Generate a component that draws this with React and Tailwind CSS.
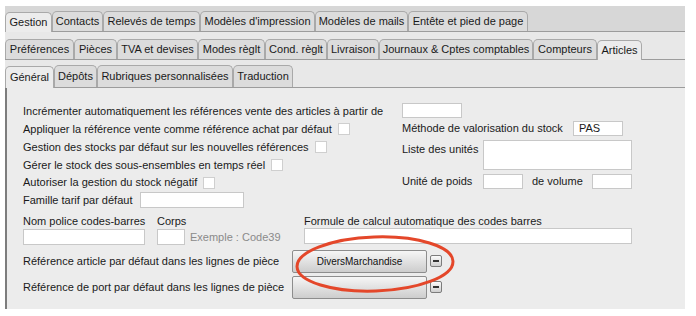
import React from 'react';

const row1 = [
  ['Gestion', 47, true],
  ['Contacts', 51],
  ['Relevés de temps', 97],
  ["Modèles d'impression", 115],
  ['Modèles de mails', 93],
  ['Entête et pied de page', 120],
];

const row2 = [
  ['Préférences', 69],
  ['Pièces', 43],
  ['TVA et devises', 81],
  ['Modes règlt', 67],
  ['Cond. règlt', 62],
  ['Livraison', 52],
  ['Journaux & Cptes comptables', 154],
  ['Compteurs', 64],
  ['Articles', 45, true],
];

const row3 = [
  ['Général', 49, true],
  ['Dépôts', 43],
  ['Rubriques personnalisées', 136],
  ['Traduction', 60],
];

function Tab({ label, width, active, height }) {
  return (
    <div
      style={{ width }}
      className={`flex shrink-0 items-center justify-center whitespace-nowrap rounded-t-[5px] border border-b-0 border-[#a9a9a9] text-[11px] text-[#1a1a1a] ${
        active ? 'relative z-10 -mb-px bg-[#ececec] pb-px' : 'bg-[#dcdcdc]'
      } ${height}`}
    >
      {label}
    </div>
  );
}

function TabRow({ tabs, strip, height }) {
  return (
    <div className={`flex items-end border-b border-[#9c9c9c] ${strip}`}>
      {tabs.map(([label, width, active]) => (
        <Tab key={label} label={label} width={width} active={active} height={height} />
      ))}
    </div>
  );
}

function Field({ className = '', children }) {
  return (
    <div className={`shrink-0 border border-[#c8c8c8] bg-white text-[11px] leading-[13px] ${className}`}>
      {children}
    </div>
  );
}

function Check() {
  return <div className="ml-[6px] h-[12px] w-[12px] shrink-0 border border-[#cfcfcf] bg-white" />;
}

function Minus() {
  return (
    <div className="ml-[3px] flex h-[12px] w-[12px] items-center justify-center rounded-[2px] border border-[#7c7c7c] bg-gradient-to-b from-[#fbfbfb] to-[#cfcfcf]">
      <div className="h-[2px] w-[6px] bg-[#333]" />
    </div>
  );
}

function RefButton({ children }) {
  return (
    <div className="flex h-[23px] w-[135px] shrink-0 items-center justify-center rounded-[2px] border border-[#8d8d8d] bg-gradient-to-b from-[#f6f6f6] to-[#cdcdcd] text-[10px] text-[#111]">
      {children}
    </div>
  );
}

export default function App() {
  return (
    <div className="h-[316px] w-[696px] bg-white pl-[5px] pt-[6px]" style={{ fontFamily: '"Liberation Sans", Arial, sans-serif' }}>
      <div className="relative flex h-[303px] w-[680px] flex-col whitespace-nowrap bg-[#ececec] text-[#1a1a1a]">
        <TabRow tabs={row1} strip="h-[26px] bg-[#d7d7d7]" height="h-[20px]" />
        <TabRow tabs={row2} strip="h-[28px] bg-[#e8e8e8]" height="h-[20px]" />
        <TabRow tabs={row3} strip="h-[28px] bg-[#e8e8e8]" height="h-[22px]" />

        <div className="flex flex-1 flex-col border-l-2 border-[#7d7d7d] pl-[16px] pt-[15px] text-[11px]">
          <div className="flex">
            <div className="flex w-[379px] shrink-0 flex-col">
              <div className="flex h-[17px] items-center">
                Incrémenter automatiquement les références vente des articles à partir de
              </div>
              <div className="flex h-[18px] items-center">
                Appliquer la référence vente comme référence achat par défaut
                <Check />
              </div>
              <div className="flex h-[18px] items-center">
                Gestion des stocks par défaut sur les nouvelles références
                <Check />
              </div>
              <div className="flex h-[18px] items-center">
                Gérer le stock des sous-ensembles en temps réel
                <Check />
              </div>
              <div className="flex h-[17px] items-center">
                Autoriser la gestion du stock négatif
                <Check />
              </div>
              <div className="flex h-[18px] items-center">
                Famille tarif par défaut
                <Field className="ml-[8px] h-[16px] w-[104px]" />
              </div>
            </div>
            <div className="flex flex-col">
              <Field className="h-[15px] w-[60px]" />
              <div className="mt-[3px] flex h-[15px] items-center">
                <span className="w-[171px]">Méthode de valorisation du stock</span>
                <Field className="h-[15px] w-[50px] pl-[5px]">PAS</Field>
              </div>
              <div className="mt-[4px] flex">
                <span className="w-[81px] pt-[1px]">Liste des unités</span>
                <Field className="h-[30px] w-[149px]" />
              </div>
              <div className="mt-[4px] flex h-[15px] items-center">
                <span className="w-[81px]">Unité de poids</span>
                <Field className="h-[15px] w-[40px]" />
                <span className="ml-[9px] w-[60px]">de volume</span>
                <Field className="h-[15px] w-[40px]" />
              </div>
            </div>
          </div>

          <div className="mt-[5px] flex">
            <div className="flex w-[134px] shrink-0 flex-col">
              <span className="h-[14px] leading-[14px]">Nom police codes-barres</span>
              <Field className="mt-[1px] h-[16px] w-[122px]" />
            </div>
            <div className="flex w-[147px] shrink-0 flex-col">
              <span className="h-[14px] leading-[14px]">Corps</span>
              <div className="mt-[1px] flex items-center">
                <Field className="h-[16px] w-[28px]" />
                <span className="ml-[5px] text-[#8a8a8a]">Exemple : Code39</span>
              </div>
            </div>
            <div className="flex flex-col">
              <span className="h-[14px] leading-[14px]">Formule de calcul automatique des codes barres</span>
              <Field className="h-[16px] w-[328px]" />
            </div>
          </div>

          <div className="mt-[4px] flex items-center">
            <span className="w-[269px] shrink-0">Référence article par défaut dans les lignes de pièce</span>
            <RefButton>DiversMarchandise</RefButton>
            <Minus />
          </div>
          <div className="mt-[3px] flex items-center">
            <span className="w-[269px] shrink-0">Référence de port par défaut dans les lignes de pièce</span>
            <RefButton />
            <Minus />
          </div>
        </div>

        <svg className="pointer-events-none absolute left-[280px] top-[218px]" width="190" height="80" viewBox="0 0 190 80">
          <ellipse cx="90" cy="40" rx="78" ry="27" fill="none" stroke="#e4472a" strokeWidth="3" transform="rotate(-2 90 40)" />
        </svg>
      </div>
    </div>
  );
}
